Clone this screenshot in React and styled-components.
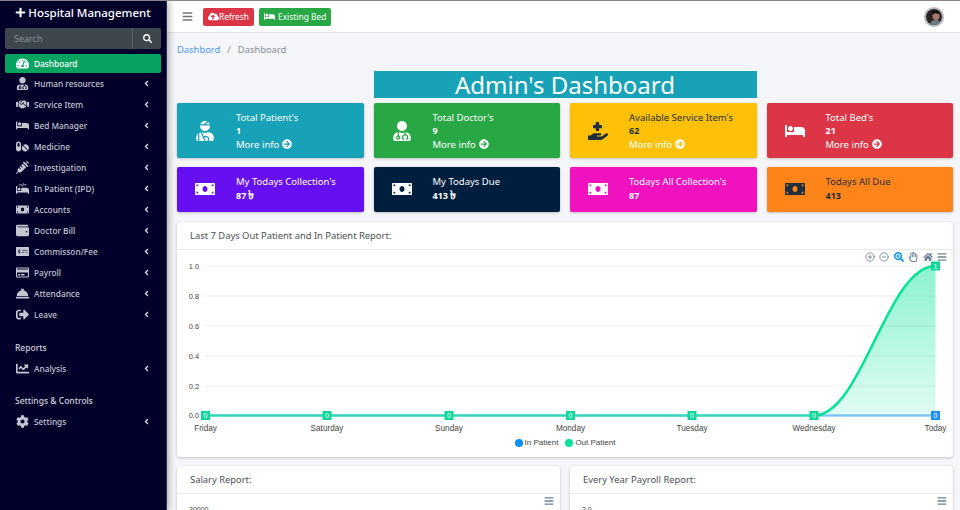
import React from "react";
import styled, { createGlobalStyle } from "styled-components";
import {
  FaAngleLeft,
  FaArrowCircleRight,
  FaBars,
  FaBed,
  FaChartLine,
  FaCloudUploadAlt,
  FaCog,
  FaConciergeBell,
  FaHandHoldingMedical,
  FaHandshake,
  FaHome,
  FaMoneyBill,
  FaMoneyCheckAlt,
  FaPills,
  FaPlus,
  FaProcedures,
  FaRegCreditCard,
  FaRegHandPaper,
  FaSearch,
  FaSearchPlus,
  FaSignOutAlt,
  FaSyringe,
  FaTachometerAlt,
  FaUserInjured,
  FaUserMd,
  FaWallet,
} from "react-icons/fa";
import { FiMinusCircle, FiPlusCircle } from "react-icons/fi";

const menu = [
  { label: "Human resources", icon: FaUserMd },
  { label: "Service Item", icon: FaHandshake },
  { label: "Bed Manager", icon: FaBed },
  { label: "Medicine", icon: FaPills },
  { label: "Investigation", icon: FaSyringe },
  { label: "In Patient (IPD)", icon: FaProcedures },
  { label: "Accounts", icon: FaMoneyBill },
  { label: "Doctor Bill", icon: FaWallet },
  { label: "Commisson/Fee", icon: FaMoneyCheckAlt },
  { label: "Payroll", icon: FaRegCreditCard },
  { label: "Attendance", icon: FaConciergeBell },
  { label: "Leave", icon: FaSignOutAlt },
];

const stats = [
  { title: "Total Patient's", value: "1", icon: FaUserInjured, bg: "#17a2b8", more: true },
  { title: "Total Doctor's", value: "9", icon: FaUserMd, bg: "#28a745", more: true },
  { title: "Available Service Item's", value: "62", icon: FaHandHoldingMedical, bg: "#ffc107", dark: true, more: true },
  { title: "Total Bed's", value: "21", icon: FaBed, bg: "#dc3545", more: true },
  { title: "My Todays Collection's", value: "87", taka: true, icon: FaMoneyBill, bg: "#6610f2" },
  { title: "My Todays Due", value: "413", taka: true, icon: FaMoneyBill, bg: "#001f3f" },
  { title: "Todays All Collection's", value: "87", icon: FaMoneyBill, bg: "#f012be" },
  { title: "Todays All Due", value: "413", icon: FaMoneyBill, bg: "#ff851b", dark: true },
];

const days = [
  ["Friday", 205.5],
  ["Saturday", 327],
  ["Sunday", 449],
  ["Monday", 570.5],
  ["Tuesday", 692],
  ["Wednesday", 814],
  ["Today", 935.5],
];

const yTicks = [
  ["1.0", 266],
  ["0.8", 296],
  ["0.6", 326],
  ["0.4", 356],
  ["0.2", 386],
  ["0.0", 415.5],
];

const curve = "M814 415.5 C862 415.5 887 266 935.5 266";

const App = () => {
  return (
    <>
      <GlobalStyle />
      <Page>
        <Sidebar>
          <Brand>
            <FaPlus />
            Hospital Management
          </Brand>
          <SearchBox>
            <SearchText>Search</SearchText>
            <SearchButton>
              <FaSearch />
            </SearchButton>
          </SearchBox>
          <ActiveItem>
            <MenuIcon>
              <FaTachometerAlt />
            </MenuIcon>
            Dashboard
          </ActiveItem>
          {menu.map((item) => (
            <MenuRow key={item.label} item={item} />
          ))}
          <SectionTitle>Reports</SectionTitle>
          <MenuRow item={{ label: "Analysis", icon: FaChartLine }} />
          <SectionTitle>Settings &amp; Controls</SectionTitle>
          <MenuRow item={{ label: "Settings", icon: FaCog }} />
        </Sidebar>
        <Main>
          <Navbar>
            <Burger>
              <FaBars />
            </Burger>
            <NavButton $bg="#dc3545" $gap="0">
              <FaCloudUploadAlt />
              Refresh
            </NavButton>
            <NavButton $bg="#28a745" $gap="3px">
              <FaBed />
              Existing Bed
            </NavButton>
            <Avatar>
              <svg viewBox="0 0 16 16" width="16" height="16">
                <rect width="16" height="16" fill="#2b2422" />
                <ellipse cx="10" cy="7" rx="3.5" ry="4" fill="#a9786c" />
                <path d="M4 16c0-4 3-5 6-5s5 2 5 5z" fill="#6d7a84" />
                <path d="M5 3c2-2 7-2 9 1l-2 1c-2-1-4-1-5 1z" fill="#14100f" />
              </svg>
            </Avatar>
          </Navbar>
          <Content>
            <Breadcrumb>
              <a>Dashbord</a>
              <span>/</span>
              <b>Dashboard</b>
            </Breadcrumb>
            <TitleRow>
              <PageTitle>Admin's Dashboard</PageTitle>
            </TitleRow>
            <StatGrid>
              {stats.map((s) => (
                <StatCard key={s.title} $bg={s.bg} $dark={s.dark} $tall={s.more}>
                  <StatIcon>
                    <s.icon />
                  </StatIcon>
                  <StatBody>
                    <StatTitle>{s.title}</StatTitle>
                    <StatValue>
                      {s.value}
                      {s.taka && <Taka>৳</Taka>}
                    </StatValue>
                    {s.more && (
                      <MoreInfo>
                        More info <FaArrowCircleRight />
                      </MoreInfo>
                    )}
                  </StatBody>
                </StatCard>
              ))}
            </StatGrid>
            <Card>
              <CardHead>Last 7 Days Out Patient and In Patient Report:</CardHead>
              <ChartArea>
                <Toolbar>
                  <FiPlusCircle />
                  <FiMinusCircle />
                  <ZoomIcon>
                    <FaSearchPlus />
                  </ZoomIcon>
                  <FaRegHandPaper />
                  <FaHome />
                  <FaBars />
                </Toolbar>
                <LineChart />
                <Legend>
                  <LegendDot $color="#008ffb" />
                  In Patient
                  <LegendDot $color="#00e396" />
                  Out Patient
                </Legend>
              </ChartArea>
            </Card>
            <BottomRow>
              <Card>
                <CardHead>Salary Report:</CardHead>
                <SmallChart>
                  <TickLabel>30000</TickLabel>
                  <FaBars />
                </SmallChart>
              </Card>
              <Card>
                <CardHead>Every Year Payroll Report:</CardHead>
                <SmallChart>
                  <TickLabel>2.0</TickLabel>
                  <FaBars />
                </SmallChart>
              </Card>
            </BottomRow>
          </Content>
        </Main>
      </Page>
    </>
  );
};

const MenuRow = ({ item }) => {
  const Icon = item.icon;
  return (
    <MenuItem>
      <MenuIcon>
        <Icon />
      </MenuIcon>
      {item.label}
      <Caret>
        <FaAngleLeft />
      </Caret>
    </MenuItem>
  );
};

// the apex style line chart, coordinates follow the page so viewBox starts at the card corner
const LineChart = () => (
  <ChartSvg viewBox="177 250 776 185">
    <defs>
      <linearGradient id="outFill" x1="0" y1="0" x2="0" y2="1">
        <stop offset="0" stopColor="#00e396" stopOpacity="0.45" />
        <stop offset="1" stopColor="#00e396" stopOpacity="0.12" />
      </linearGradient>
    </defs>
    {yTicks.map(([label, y]) => (
      <g key={label}>
        <line x1="205" x2="936" y1={y} y2={y} stroke="#eeeeee" strokeWidth="1" />
        <YText x="199" y={y + 2.5} textAnchor="end">
          {label}
        </YText>
      </g>
    ))}
    <path d={`${curve} L935.5 415.5 Z`} fill="url(#outFill)" />
    <line x1="205.5" x2="935.5" y1="415.5" y2="415.5" stroke="#008ffb" strokeOpacity="0.45" strokeWidth="2.5" />
    <line x1="205.5" x2="814" y1="415.5" y2="415.5" stroke="#00e396" strokeOpacity="0.6" strokeWidth="2.5" />
    <path d={curve} fill="none" stroke="#00e396" strokeWidth="2.5" />
    {days.map(([day, x], i) => (
      <g key={day}>
        <rect x={x - 4.5} y="411" width="9" height="9" fill={i === 6 ? "#1e90f5" : "#0fd79a"} />
        <PointText x={x} y="418">0</PointText>
        <AxisText x={x} y="431" textAnchor="middle">
          {day}
        </AxisText>
      </g>
    ))}
    <rect x="931" y="261.5" width="9" height="9" fill="#0fd79a" />
    <PointText x="935.5" y="268.5">1</PointText>
  </ChartSvg>
);

const GlobalStyle = createGlobalStyle`
  html, body {
    margin: 0;
    height: 100%;
    overflow: hidden;
  }
  body {
    font-family: "Noto Sans", "DejaVu Sans", sans-serif;
    background: #f4f6f9;
  }
`;

const Page = styled.div`
  display: flex;
  height: 510px;
  overflow: hidden;
  border-top: 1px solid #8f8089;
  box-sizing: border-box;
`;

const Sidebar = styled.aside`
  width: 167px;
  flex-shrink: 0;
  background: #00002a;
  border-right: 1px solid #30304e;
  box-sizing: border-box;
  box-shadow: 2px 0 7px rgba(0, 0, 0, 0.3);
  padding: 0 5px;
  color: #c2c7d0;
  position: relative;
`;

const Brand = styled.div`
  height: 22px;
  display: flex;
  align-items: center;
  justify-content: center;
  gap: 2px;
  color: #fff;
  font-size: 11.5px;
  font-weight: 500;
  svg {
    font-size: 11px;
  }
`;

const SearchBox = styled.div`
  height: 21px;
  margin-top: 5px;
  display: flex;
  background: #3f474e;
  border-radius: 2px;
`;

const SearchText = styled.div`
  flex: 1;
  padding-left: 9px;
  font-size: 9px;
  line-height: 21px;
  color: #8a9097;
`;

const SearchButton = styled.div`
  width: 28px;
  display: flex;
  align-items: center;
  justify-content: center;
  border-left: 1px solid #5a6168;
  color: #fff;
  font-size: 9px;
`;

const MenuItem = styled.div`
  height: 21px;
  display: flex;
  align-items: center;
  font-size: 8.3px;
  font-weight: 500;
  color: #c2c7d0;
`;

const ActiveItem = styled(MenuItem)`
  height: 19px;
  margin-top: 5px;
  background: #06a25f;
  border-radius: 2px;
  color: #fff;
`;

const MenuIcon = styled.span`
  width: 29px;
  display: flex;
  justify-content: center;
  padding-left: 6px;
  box-sizing: border-box;
  font-size: 13px;
`;

const Caret = styled.span`
  margin-left: auto;
  margin-right: 10px;
  display: flex;
  font-size: 9px;
  color: #d5d8de;
`;

const SectionTitle = styled.div`
  margin-top: 14.5px;
  padding-left: 10px;
  height: 18px;
  line-height: 16px;
  font-size: 8.5px;
  font-weight: 500;
  color: #d0d4da;
`;

const Main = styled.main`
  flex: 1;
  min-width: 0;
`;

const Navbar = styled.header`
  height: 32px;
  box-sizing: border-box;
  display: flex;
  align-items: center;
  background: #fff;
  border-bottom: 1px solid #e3e6ea;
  padding: 0 16px 0 15px;
`;

const Burger = styled.span`
  display: flex;
  font-size: 11px;
  color: #6c7178;
  margin-right: 10px;
`;

const NavButton = styled.span`
  height: 18px;
  margin-right: 5px;
  padding: 0 5px;
  display: flex;
  align-items: center;
  gap: ${(p) => p.$gap};
  border-radius: 2px;
  background: ${(p) => p.$bg};
  color: #fff;
  font-size: 8.4px;
  svg {
    font-size: 11px;
  }
`;

const Avatar = styled.span`
  margin-left: auto;
  width: 16px;
  height: 16px;
  border: 2px solid #b4bac2;
  border-radius: 50%;
  overflow: hidden;
  display: flex;
`;

const Content = styled.div`
  padding: 0 7px 0 10px;
`;

const Breadcrumb = styled.div`
  height: 33px;
  margin-bottom: 5px;
  display: flex;
  align-items: center;
  gap: 7px;
  font-size: 9.4px;
  color: #868e96;
  a {
    color: #5096f8;
  }
  b {
    font-weight: 400;
  }
`;

const TitleRow = styled.div`
  display: grid;
  grid-template-columns: repeat(4, 1fr);
  column-gap: 10px;
  margin-bottom: 5px;
`;

const StatGrid = styled.div`
  display: grid;
  grid-template-columns: repeat(4, 1fr);
  gap: 9px 10px;
`;

const PageTitle = styled.h1`
  grid-column: 2 / span 2;
  height: 27px;
  margin: 0;
  background: #17a2b8;
  color: #fff;
  font-size: 24px;
  font-weight: 400;
  line-height: 27px;
  text-align: center;
`;

const StatCard = styled.div`
  height: ${(p) => (p.$tall ? "55px" : "45px")};
  box-sizing: border-box;
  padding-bottom: ${(p) => (p.$tall ? "0" : "2px")};
  display: flex;
  align-items: center;
  background: ${(p) => p.$bg};
  color: ${(p) => (p.$dark ? "#1f2d3d" : "#fff")};
  border-radius: 2px;
  box-shadow: 0 0 1px rgba(0, 0, 0, 0.13), 0 1px 3px rgba(0, 0, 0, 0.2);
`;

const StatIcon = styled.div`
  width: 59px;
  padding-right: 3px;
  box-sizing: border-box;
  flex-shrink: 0;
  display: flex;
  justify-content: center;
  font-size: 20px;
`;

const StatBody = styled.div`
  display: flex;
  flex-direction: column;
  gap: 2.5px;
  font-size: 9.5px;
  line-height: 11px;
`;

const StatTitle = styled.div``;

const StatValue = styled.div`
  font-weight: 700;
  font-size: 9px;
`;

const Taka = styled.span`
  margin-left: 2px;
  font-size: 12px;
  line-height: 9px;
`;

const MoreInfo = styled.div`
  display: flex;
  align-items: center;
  gap: 3px;
  color: #fff;
  svg {
    font-size: 10px;
  }
`;

const Card = styled.section`
  margin-top: 10px;
  background: #fff;
  border-radius: 3px;
  box-shadow: 0 0 1px rgba(0, 0, 0, 0.13), 0 1px 3px rgba(0, 0, 0, 0.2);
  overflow: hidden;
`;

const CardHead = styled.div`
  height: 28px;
  box-sizing: border-box;
  padding-left: 13px;
  display: flex;
  align-items: center;
  border-bottom: 1px solid #e6e8eb;
  font-size: 9.4px;
  color: #4a5056;
`;

const ChartArea = styled.div`
  position: relative;
  height: 207px;
`;

const ChartSvg = styled.svg`
  display: block;
  width: 776px;
  height: 185px;
`;

const AxisText = styled.text`
  font-family: "Liberation Sans", sans-serif;
  font-size: 8.2px;
  fill: #444;
`;

const YText = styled(AxisText)`
  font-size: 7.4px;
`;

const PointText = styled.text`
  font-family: "Liberation Sans", sans-serif;
  font-size: 7px;
  fill: #fff;
  text-anchor: middle;
`;

const Toolbar = styled.div`
  position: absolute;
  top: 2px;
  right: 6px;
  display: flex;
  align-items: center;
  gap: 4.5px;
  font-size: 10px;
  color: #6e8192;
`;

const ZoomIcon = styled.span`
  display: flex;
  color: #008ffb;
`;

const Legend = styled.div`
  display: flex;
  align-items: center;
  justify-content: center;
  font-family: "Liberation Sans", sans-serif;
  font-size: 8px;
  color: #444;
  margin-top: 3px;
`;

const LegendDot = styled.span`
  width: 8px;
  height: 8px;
  margin: 0 2px 0 7px;
  border-radius: 50%;
  background: ${(p) => p.$color};
  &:first-child {
    margin-left: 0;
  }
`;

const BottomRow = styled.div`
  display: grid;
  grid-template-columns: 1fr 1fr;
  gap: 10px;
  margin-top: -1px;
`;

const SmallChart = styled.div`
  position: relative;
  height: 60px;
  padding: 12px 0 0 12px;
  svg {
    position: absolute;
    top: 2px;
    right: 6px;
    font-size: 10px;
    color: #6e8192;
  }
`;

const TickLabel = styled.div`
  font-family: "Liberation Sans", sans-serif;
  font-size: 7px;
  color: #444;
`;

export default App;
